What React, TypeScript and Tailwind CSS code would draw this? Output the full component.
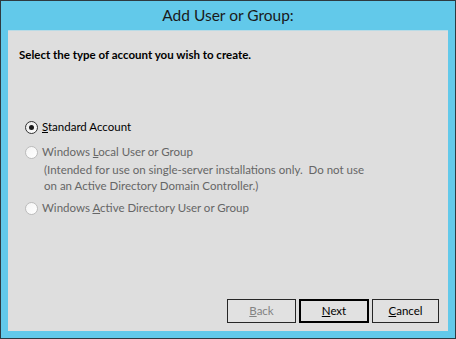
import React from "react";

type RadioProps = {
  checked?: boolean;
  disabled?: boolean;
  children: React.ReactNode;
};

const Radio: React.FC<RadioProps> = ({ checked, disabled, children }) => {
  return (
    <div className="flex items-center h-[18px]">
      <span
        className={`w-[13px] h-[13px] rounded-full border flex items-center justify-center ${
          disabled
            ? "border-[#bcbcbc] bg-gradient-to-br from-[#f4f4f4] to-[#ffffff]"
            : "border-[#333333] bg-gradient-to-br from-[#e8e8e8] to-[#ffffff]"
        }`}>
        {checked && <span className="w-[5px] h-[5px] rounded-full bg-[#1a1a1a]" />}
      </span>
      <span className={`ml-[4px] ${disabled ? "text-[#666666]" : "text-black"}`}>
        {children}
      </span>
    </div>
  );
};

const Button: React.FC<{
  width: string;
  primary?: boolean;
  disabled?: boolean;
  children: React.ReactNode;
}> = ({ width, primary, disabled, children }) => {
  return (
    <button
      className={`${width} h-[24px] bg-[#e1e1e1] flex items-center justify-center ${
        primary ? "border-2 border-black" : "border border-[#262626]"
      } ${disabled ? "text-[#838383]" : "text-black"}`}>
      {children}
    </button>
  );
};

export default function App() {
  return (
    <div
      className="w-[456px] h-[339px] border border-[#2e3a40] bg-[#62c9ea] flex flex-col text-[11.5px]"
      style={{ fontFamily: 'Lato, "Noto Sans", sans-serif' }}>
      <div className="h-[29px] flex items-center justify-center text-[15.5px] text-[#1a1a1a]">
        Add User or Group:
      </div>
      <div className="flex-1 mx-[7px] mb-[7px] bg-[#dedede] border-t border-[#b9dbe6] flex flex-col pl-[11px] pr-[9px] pt-[15px] pb-[8px]">
        <h1 className="font-bold text-black leading-[18px]">
          Select the type of account you wish to create.
        </h1>

        <div className="mt-[54px] pl-[6px] flex flex-col">
          <Radio checked>
            <u>S</u>tandard Account
          </Radio>
          <div className="mt-[7px]">
            <Radio disabled>
              Windows <u>L</u>ocal User or Group
            </Radio>
          </div>
          <p className="ml-[19px] text-[#666666] leading-[16px] mt-[1px]">
            (Intended for use on single-server installations only.&nbsp; Do not use
            <br />
            on an Active Directory Domain Controller.)
          </p>
          <div className="mt-[5px]">
            <Radio disabled>
              Windows <u>A</u>ctive Directory User or Group
            </Radio>
          </div>
        </div>

        <div className="mt-auto flex justify-end gap-[3px]">
          <Button width="w-[69px]" disabled>
            <span>
              <u>B</u>ack
            </span>
          </Button>
          <Button width="w-[70px]" primary>
            <span>
              <u>N</u>ext
            </span>
          </Button>
          <Button width="w-[67px]">
            <span>
              <u>C</u>ancel
            </span>
          </Button>
        </div>
      </div>
    </div>
  );
}
